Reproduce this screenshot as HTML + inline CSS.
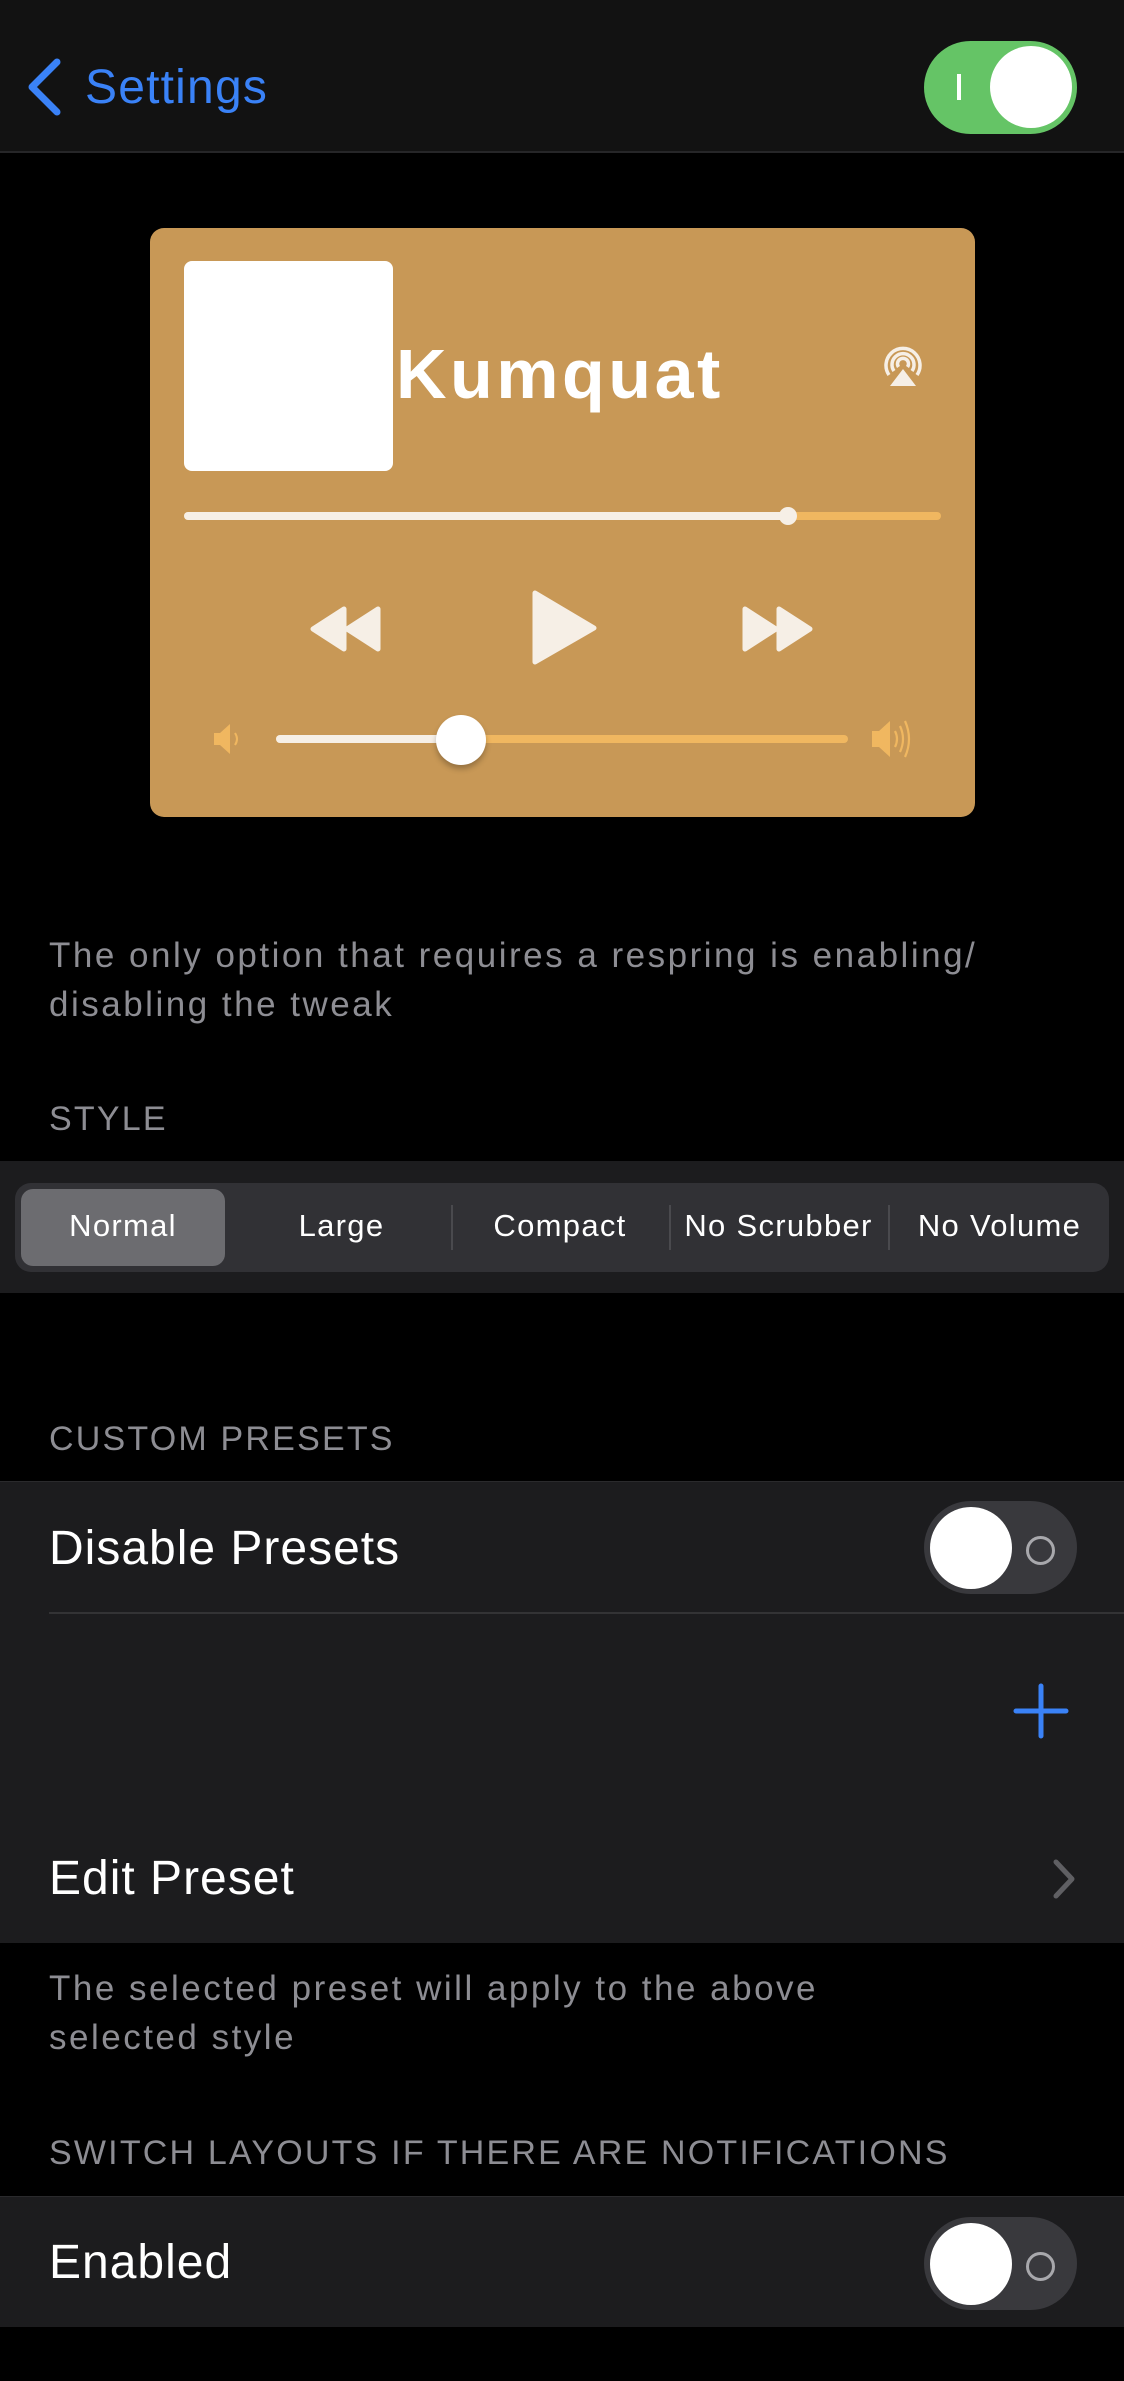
<!DOCTYPE html>
<html><head><meta charset="utf-8"><style>
*{margin:0;padding:0;box-sizing:border-box}
body{width:1124px;height:2381px;background:#000;position:relative;overflow:hidden;font-family:"Liberation Sans",sans-serif;color:#fff}
.a{position:absolute}
.tog{position:absolute;width:153px;height:93px;border-radius:47px}
.knob{position:absolute;width:82px;height:82px;border-radius:50%;background:#fff;top:6px}
.hdr{position:absolute;left:49px;font-size:34px;color:#8d8d93;letter-spacing:2.2px}
.foot{position:absolute;left:49px;font-size:35px;color:#8d8d93;line-height:49px;letter-spacing:2.5px}
.row{position:absolute;left:0;width:1124px;background:#1c1c1e}
.lbl{position:absolute;left:49px;font-size:48px;color:#fff;letter-spacing:1px}
.seg{position:absolute;top:1208px;text-align:center;font-size:31px;letter-spacing:1.3px}
</style></head><body>
<div class="a" style="left:0;top:0;width:1124px;height:153px;background:#121212;border-bottom:2px solid #262628"></div>
<svg class="a" style="left:24px;top:58px" width="40" height="58"><path d="M33 4 L8 29 L33 54" stroke="#3a82f7" stroke-width="7" fill="none" stroke-linecap="round" stroke-linejoin="round"/></svg>
<div class="a" style="left:85px;top:60px;font-size:48px;color:#3a82f7;letter-spacing:1.2px">Settings</div>
<div class="tog" style="left:924px;top:41px;background:#65c466"><div class="a" style="left:33px;top:33px;width:4px;height:26px;background:#fff"></div><div class="knob" style="left:66px;top:5px"></div></div>

<div class="a" style="left:150px;top:228px;width:825px;height:589px;background:#c89856;border-radius:14px"></div>
<div class="a" style="left:184px;top:261px;width:209px;height:210px;background:#fff;border-radius:8px"></div>
<div class="a" style="left:396px;top:334px;font-size:70px;font-weight:bold;color:#fff;letter-spacing:3.5px">Kumquat</div>
<svg class="a" style="left:880px;top:344px" width="46" height="46" viewBox="0 0 46 46"><g fill="none" stroke="#f6efe6" stroke-width="3.5"><path d="M9 31 A17 17 0 1 1 37 31"/><path d="M14 27 A11 11 0 1 1 32 27"/><path d="M18.5 23 A5.5 5.5 0 1 1 27.5 23"/></g><path d="M23 25 L36 42 L10 42Z" fill="#f6efe6"/></svg>
<div class="a" style="left:184px;top:512px;width:757px;height:8px;border-radius:4px;background:#f0b760"></div>
<div class="a" style="left:184px;top:512px;width:604px;height:8px;border-radius:4px;background:#f6efe6"></div>
<div class="a" style="left:779px;top:507px;width:18px;height:18px;border-radius:50%;background:#f6efe6"></div>
<svg class="a" style="left:300px;top:580px" width="540" height="100" viewBox="300 580 540 100"><g fill="#f6efe6" stroke="#f6efe6" stroke-width="5" stroke-linejoin="round"><path d="M313 629 L344 609 L344 649Z"/><path d="M347 629 L378 609 L378 649Z"/><path d="M535 593 L594 628 L535 662Z"/><path d="M745 609 L776 629 L745 649Z"/><path d="M779 609 L810 629 L779 649Z"/></g></svg>
<div class="a" style="left:276px;top:735px;width:572px;height:8px;border-radius:4px;background:#f0b760"></div>
<div class="a" style="left:276px;top:735px;width:185px;height:8px;border-radius:4px;background:#f6efe6"></div>
<div class="a" style="left:436px;top:715px;width:50px;height:50px;border-radius:50%;background:#fff;box-shadow:0 4px 6px rgba(0,0,0,0.25)"></div>
<svg class="a" style="left:210px;top:719px" width="40" height="40"><path d="M4 14 H10 L20 5 V35 L10 26 H4Z" fill="#f0b760"/><path d="M25 14 Q29 20 25 26" stroke="#f0b760" stroke-width="2" fill="none"/></svg>
<svg class="a" style="left:868px;top:712px" width="54" height="54"><path d="M4 19 H11 L22 9 V45 L11 35 H4Z" fill="#f0b760"/><g stroke="#f0b760" stroke-width="2.2" fill="none"><path d="M27 19 Q31 27 27 35"/><path d="M32 14 Q38 27 32 40"/><path d="M37 9 Q45 27 37 45"/></g></svg>

<div class="foot" style="top:931px">The only option that requires a respring is enabling/<br>disabling the tweak</div>
<div class="hdr" style="top:1100px">STYLE</div>
<div class="row" style="top:1161px;height:132px"></div>
<div class="a" style="left:15px;top:1183px;width:1094px;height:89px;border-radius:16px;background:#313135"></div>
<div class="a" style="left:21px;top:1189px;width:204px;height:77px;border-radius:12px;background:#6c6c70"></div>
<div class="a" style="left:451px;top:1205px;width:2px;height:45px;background:#4a4a4e"></div>
<div class="a" style="left:669px;top:1205px;width:2px;height:45px;background:#4a4a4e"></div>
<div class="a" style="left:888px;top:1205px;width:2px;height:45px;background:#4a4a4e"></div>
<div class="seg" style="left:21px;width:204px">Normal</div>
<div class="seg" style="left:232px;width:219px">Large</div>
<div class="seg" style="left:451px;width:218px">Compact</div>
<div class="seg" style="left:669px;width:219px">No Scrubber</div>
<div class="seg" style="left:890px;width:219px">No Volume</div>

<div class="hdr" style="top:1420px">CUSTOM PRESETS</div>
<div class="row" style="top:1481px;height:462px;border-top:1px solid #2a2a2c"></div>
<div class="lbl" style="top:1521px">Disable Presets</div>
<div class="tog" style="left:924px;top:1501px;background:#39393d"><div class="knob" style="left:6px;top:6px"></div><div class="a" style="left:102px;top:35px;width:29px;height:29px;border-radius:50%;border:3px solid #a8a8ac"></div></div>
<div class="a" style="left:49px;top:1612px;width:1075px;height:2px;background:#333335"></div>
<svg class="a" style="left:1013px;top:1683px" width="56" height="56"><path d="M28 3 V53 M3 28 H53" stroke="#3a82f7" stroke-width="5" stroke-linecap="round"/></svg>
<div class="lbl" style="top:1851px">Edit Preset</div>
<svg class="a" style="left:1050px;top:1858px" width="28" height="42"><path d="M6 4 L22 21 L6 38" stroke="#5f5f63" stroke-width="5" fill="none" stroke-linecap="round" stroke-linejoin="round"/></svg>
<div class="foot" style="top:1964px">The selected preset will apply to the above<br>selected style</div>
<div class="hdr" style="top:2134px">SWITCH LAYOUTS IF THERE ARE NOTIFICATIONS</div>
<div class="row" style="top:2196px;height:131px;border-top:1px solid #2a2a2c"></div>
<div class="lbl" style="top:2235px">Enabled</div>
<div class="tog" style="left:924px;top:2217px;background:#39393d"><div class="knob" style="left:6px;top:6px"></div><div class="a" style="left:102px;top:35px;width:29px;height:29px;border-radius:50%;border:3px solid #a8a8ac"></div></div>
</body></html>
